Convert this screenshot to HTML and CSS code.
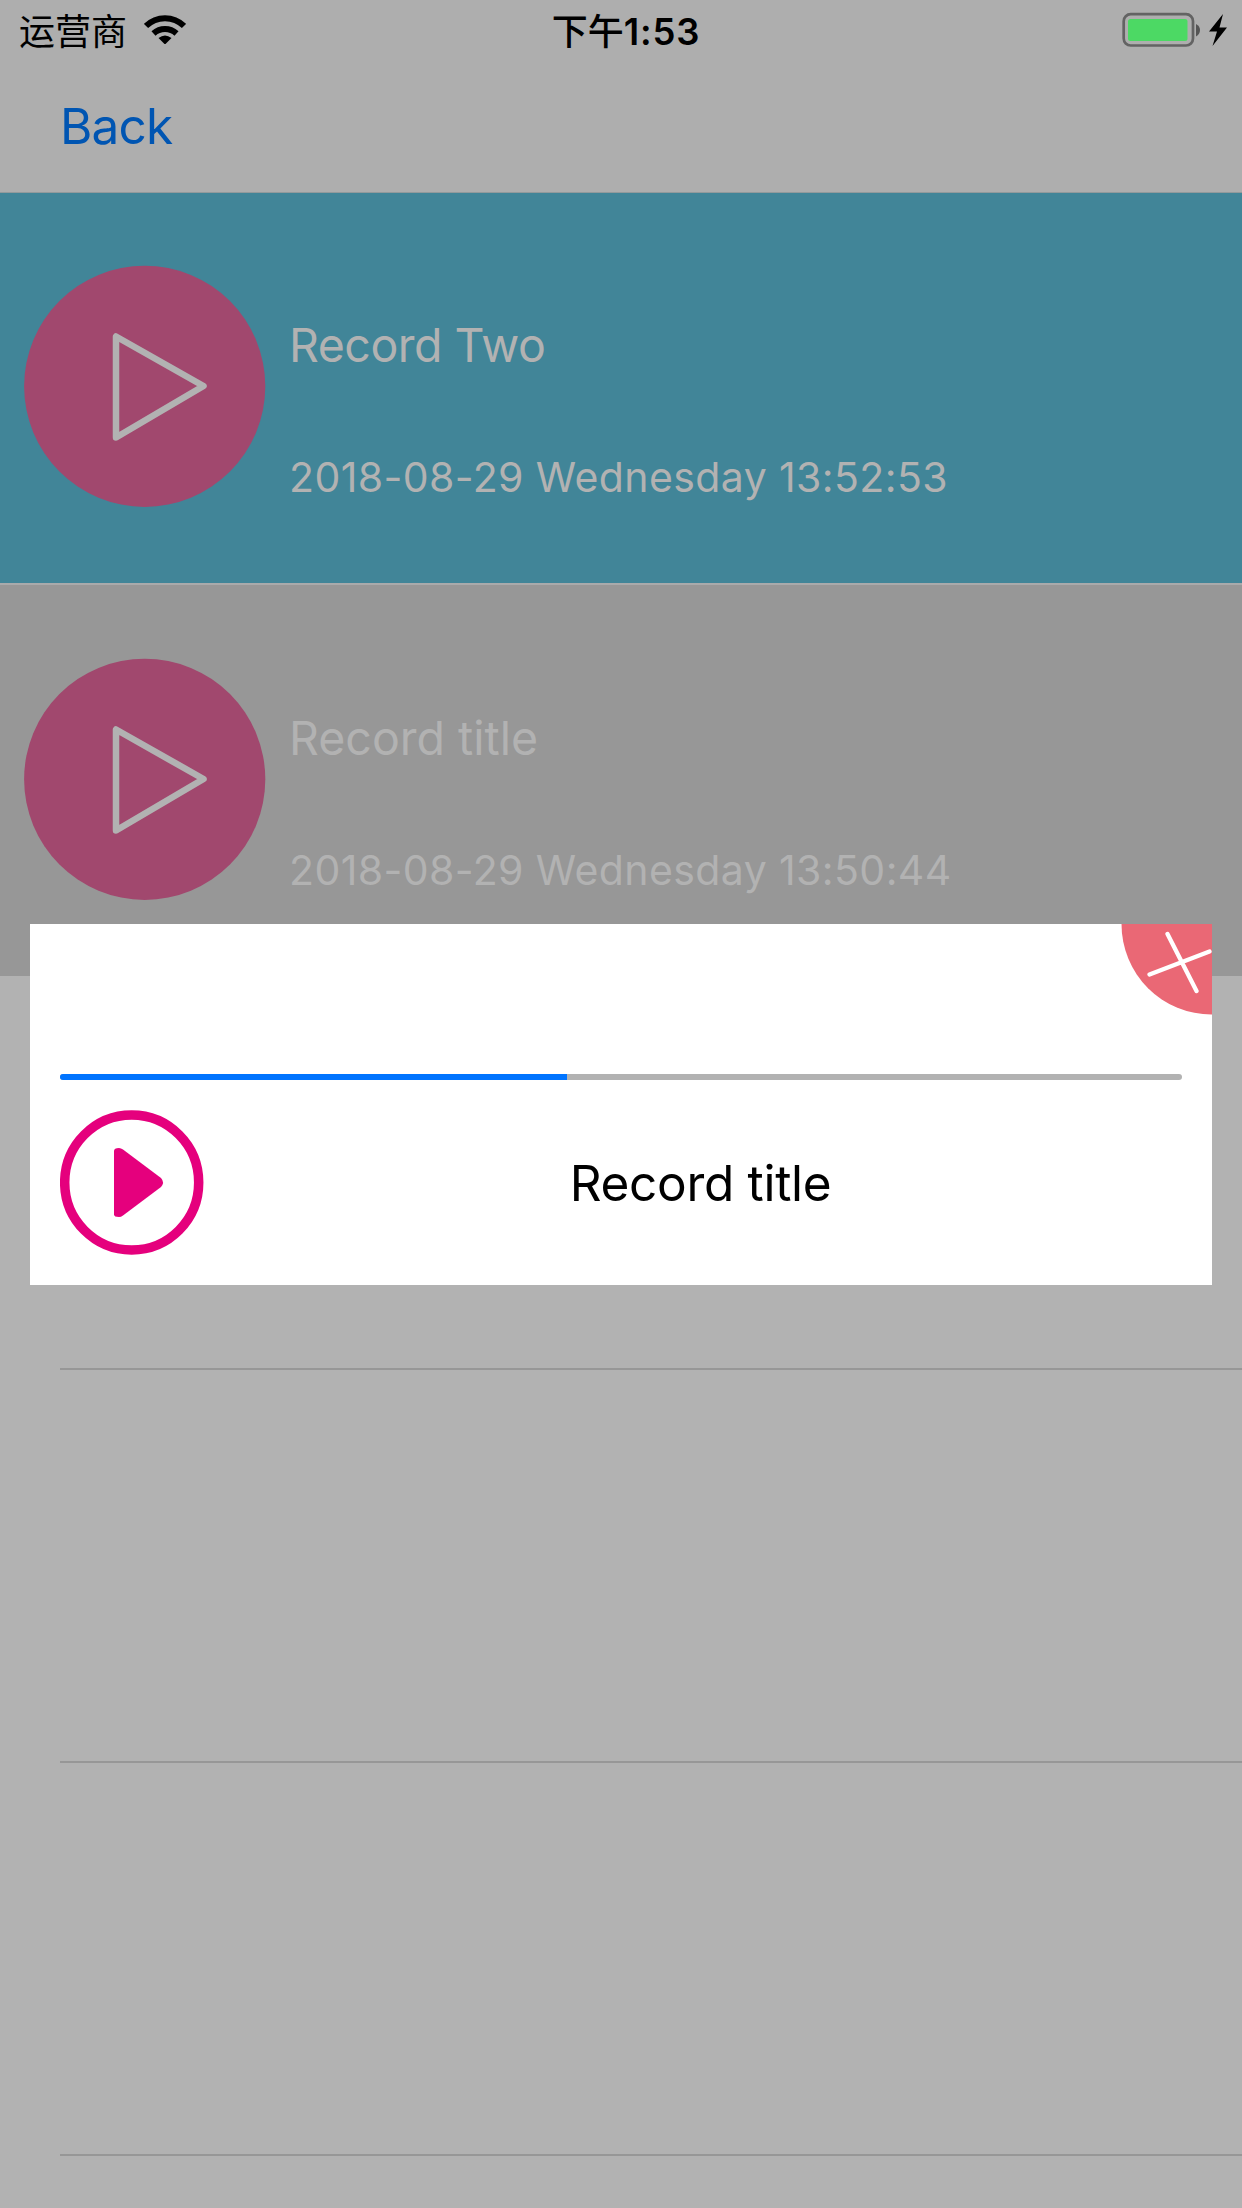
FILE: index.html
```html
<!DOCTYPE html>
<html lang="en">
<head>
<meta charset="utf-8">
<title>Records</title>
<link rel="stylesheet" href="styles.css">
</head>
<body>
<div class="screen">
  <header class="header">
    <div class="status">
      <div class="status-left">
        <span class="carrier" lang="zh">运营商</span>
        <svg class="wifi" viewBox="0 0 42 29" width="42" height="29">
          <path d="M2 11C12.500 0.500 29.500 0.500 40 11" fill="none" stroke="#000" stroke-width="6"/>
          <path d="M9.500 18.500C16 12.500 26 12.500 32.500 18.500" fill="none" stroke="#000" stroke-width="6"/>
          <path d="M14.500 23Q21 18 27.500 23L21 29.500Z"/>
        </svg>
      </div>
      <div class="time"><span class="time-cjk" lang="zh">下午</span><span class="time-num">1:53</span></div>
      <div class="status-right">
        <svg width="106" height="36" viewBox="0 0 106 36">
          <rect x="1.700" y="2.200" width="69.300" height="31.300" rx="7" fill="none" stroke="#636363" stroke-width="2.700"/>
          <rect x="6" y="7" width="59.500" height="22" rx="2.500" fill="#4cd964"/>
          <path d="M74 12Q78 14 78 18T74 24.500Z" fill="#555"/>
          <path d="M101 2L87 19.500H95L90.500 34L105 15.500H97.500Z"/>
        </svg>
      </div>
    </div>
    <div class="nav"><a class="back">Back</a></div>
  </header>
  <main class="list">
    <div class="row row-teal">
      <svg class="disc" width="242" height="242" viewBox="0 0 242 242">
        <circle cx="120.700" cy="121.300" r="120.600" fill="#a1486e"/>
        <path d="M92 71.500V172.500L179.500 121Z" fill="none" stroke="#b2b2b2" stroke-width="6.500" stroke-linejoin="round"/>
      </svg>
      <div class="info">
        <div class="title two">Record Two</div>
        <div class="date">2018-08-29 Wednesday 13:52:53</div>
      </div>
    </div>
    <div class="row row-gray">
      <svg class="disc" width="242" height="242" viewBox="0 0 242 242">
        <circle cx="120.700" cy="121.300" r="120.600" fill="#a1486e"/>
        <path d="M92 71.500V172.500L179.500 121Z" fill="none" stroke="#b2b2b2" stroke-width="6.500" stroke-linejoin="round"/>
      </svg>
      <div class="info">
        <div class="title">Record title</div>
        <div class="date">2018-08-29 Wednesday 13:50:44</div>
      </div>
    </div>
    <div class="row row-empty"></div>
    <div class="row row-empty"></div>
    <div class="row row-empty"></div>
  </main>
  <section class="player">
    <svg class="close" width="91" height="91" viewBox="0 0 91 91">
      <path d="M0.500 0A90 90.500 0 0 0 91 90.500V0Z" fill="#ea6875"/>
      <path d="M46.500 10L75.500 67M28.500 50.500L88.500 27.500" fill="none" stroke="#fff" stroke-width="4.300" stroke-linecap="round"/>
    </svg>
    <div class="track"><div class="fill" style="width: 45.200%"></div></div>
    <div class="controls">
      <svg class="play" width="144" height="145" viewBox="0 0 144 145">
        <ellipse cx="71.700" cy="72.500" rx="67" ry="67.500" fill="none" stroke="#e5007d" stroke-width="9.500"/>
        <path d="M54 41Q54 38 59 38Q61 38 63 39.500L101 68Q105 72.500 101 77L63 105.500Q61 107 59 107Q54 107 54 104.500Z" fill="#e5007d"/>
      </svg>
      <div class="playing">Record title</div>
    </div>
  </section>
</div>
</body>
</html>
```
FILE: styles.css
```css
* { box-sizing: border-box; }
body { margin: 0; font-family: Inter, "Noto Sans CJK SC", sans-serif; }
.screen { position: relative; width: 1242px; height: 2208px; overflow: hidden; background: #b2b2b2; }
.header { height: 193px; background: #aeaeae; border-bottom: 1px solid #929a9c; }
.status { display: grid; grid-template-columns: 1fr auto 1fr; align-items: center; height: 60px; padding: 0 14px 0 19px; }
.status-left { display: flex; align-items: center; gap: 17px; }
.carrier, .time-cjk { font-family: "Noto Sans CJK SC", sans-serif; font-size: 36px; line-height: 54px; }
.carrier { margin-top: -3px; }
.wifi { margin-top: -1px; }
.time { display: flex; align-items: baseline; padding-left: 5px; line-height: 54px; }
.time-num { font-size: 36.5px; font-weight: 600; letter-spacing: 0.8px; }
.time-cjk { font-weight: 500; }
.status-right { display: flex; justify-content: flex-end; }
.nav { display: flex; align-items: center; height: 132px; padding-left: 60px; }
.back { font-size: 49.5px; line-height: 60px; letter-spacing: -0.8px; color: #0055b2; }
.list { display: flex; flex-direction: column; }
.row { display: flex; flex: none; height: 393px; padding-left: 24px; }
.row-teal { height: 392px; background: #418598; border-bottom: 2px solid #a9aaab; }
.row-gray { background: #979797; height: 391px; margin-bottom: 1px; }
.row-empty { padding: 0; margin-left: 60px; border-bottom: 2px solid #979797; }
.disc { flex: none; margin-top: 72px; }
.row-gray .disc { margin-top: 73px; }
.info { display: flex; flex-direction: column; padding: 122px 0 0 23px; color: #b2b2b2; white-space: nowrap; }
.row-gray .info { padding-top: 123px; }
.title { font-size: 46.5px; line-height: 60px; }
.two { letter-spacing: -0.5px; }
.date { margin-top: 74px; font-size: 41px; line-height: 56px; letter-spacing: 0.4px; }
.player { position: absolute; left: 29.7px; top: 923.5px; width: 1182.6px; height: 361px; padding: 150px 30px 0; background: #fff; }
.close { position: absolute; right: 0; top: 0; }
.track { height: 6px; border-radius: 3px; overflow: hidden; background: #b2b2b2; }
.fill { height: 100%; background: #0074ff; }
.controls { display: flex; align-items: center; margin-top: 30px; }
.play { flex: none; }
.playing { flex: 1; padding: 2px 0 0 15px; text-align: center; font-size: 49.5px; line-height: 60px; letter-spacing: -0.3px; }
```
